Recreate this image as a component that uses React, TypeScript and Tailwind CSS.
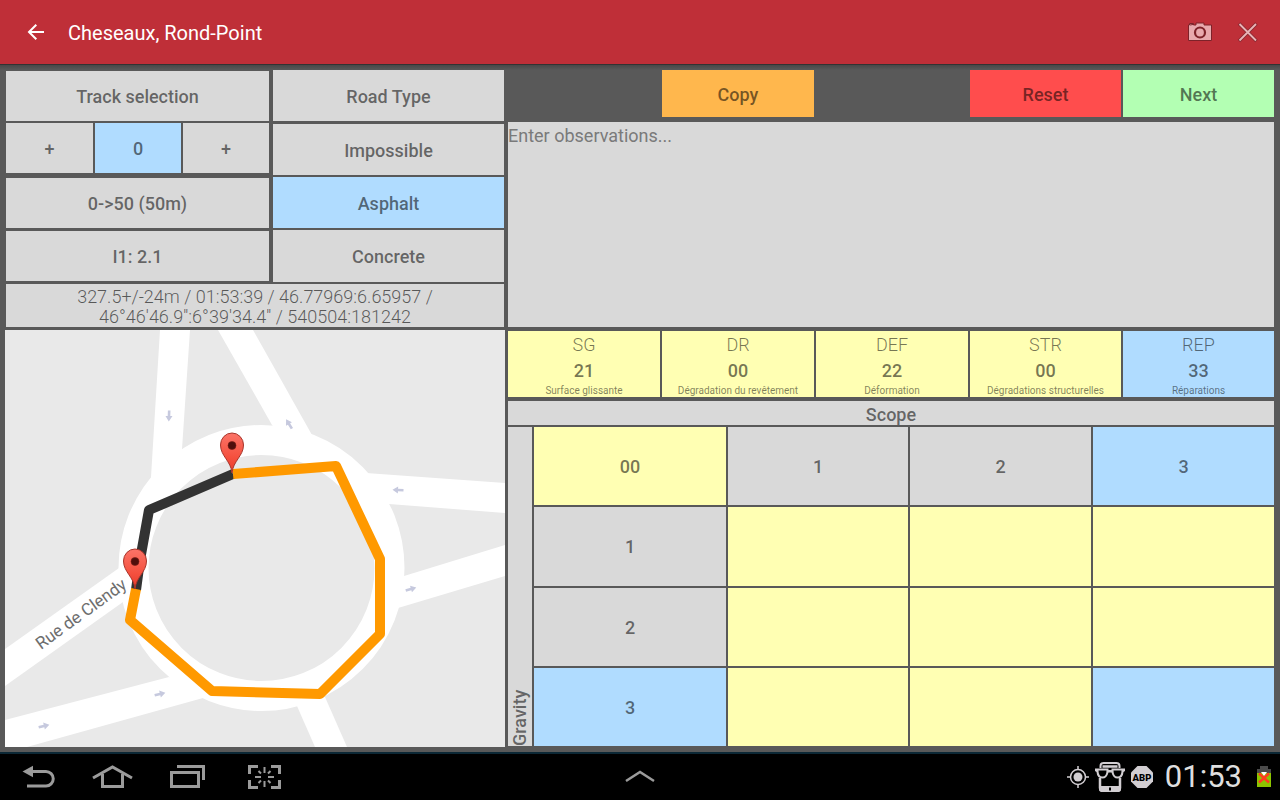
import React from "react";

type Tone = "grey" | "blue" | "yellow" | "orange" | "red" | "green";

const tones: Record<Tone, string> = {
  grey: "bg-[#d9d9d9]",
  blue: "bg-[#b0dcff]",
  yellow: "bg-[#ffffb3]",
  orange: "bg-[#ffb74d]",
  red: "bg-[#ff4d4d]",
  green: "bg-[#b3ffb3]",
};

function Cell({
  tone = "grey",
  className = "",
  label,
  children,
}: {
  tone?: Tone;
  className?: string;
  label?: string;
  children?: React.ReactNode;
}) {
  return (
    <button
      type="button"
      aria-label={label}
      className={`flex min-w-0 items-center justify-center pt-0.5 text-lg leading-5 font-medium text-black/55 ${tones[tone]} ${className}`}
    >
      {children}
    </button>
  );
}

function Header() {
  return (
    <header className="flex h-16 items-center bg-[#bf2f38] pr-5 pl-6 text-white">
      <button type="button" aria-label="Back" className="mr-5 flex size-6 items-center justify-center">
        <svg viewBox="0 0 24 24" className="size-6" fill="none" stroke="currentColor" strokeWidth="2">
          <path d="M20 12H5.500M12.300 4.700L5 12l7.300 7.300" />
        </svg>
      </button>
      <h1 className="flex-1 pt-0.5 text-xl">Cheseaux, Rond-Point</h1>
      <button type="button" aria-label="Take picture" className="mr-6 flex size-6 items-center justify-center">
        <svg viewBox="0 0 24 24" className="size-6">
          <path
            d="M.5 5h1V3.500h4V5h2.500V3h8v2h7.500v15.500H.5z"
            fill="#e8a9ad"
            stroke="#7d2229"
            strokeWidth="1"
          />
          <path d="M2 5l4-.7" stroke="#7d2229" strokeWidth="1" />
          <circle cx="12" cy="12.500" r="5" fill="#e8a9ad" stroke="#7d2229" strokeWidth="2.200" />
        </svg>
      </button>
      <button type="button" aria-label="Close" className="flex size-6 items-center justify-center">
        <svg viewBox="0 0 24 24" className="size-6" fill="none">
          <path d="M3 3.500l17.500 17.500M20.500 3.500L3 21" stroke="#8a2730" strokeWidth="3.600" />
          <path d="M3.500 4l16.500 16.500M20 4L3.500 20.500" stroke="#e8b4b7" strokeWidth="1.800" />
        </svg>
      </button>
    </header>
  );
}

const arrows = [
  { x: 169, y: 416, angle: 92 },
  { x: 289, y: 424, angle: -122 },
  { x: 398, y: 490, angle: 183 },
  { x: 411, y: 589, angle: -16 },
  { x: 160, y: 694, angle: -14 },
  { x: 44, y: 726, angle: -14 },
];

function Pin({ x, y }: { x: number; y: number }) {
  return (
    <g transform={`translate(${x} ${y})`}>
      <path
        d="M0 0C-1-12-11.500-17-11.500-28A11.500 12 0 0 1 11.500-28C11.500-17 1-12 0 0z"
        fill="url(#pin)"
        stroke="#a8352b"
        strokeWidth="1"
      />
      <circle cx="0" cy="-27.500" r="4" fill="#4f0f0c" stroke="#7b1d16" strokeWidth="0.600" />
    </g>
  );
}

function RoadMap() {
  return (
    <svg
      role="img"
      aria-label="Map"
      viewBox="5 330 500 417"
      preserveAspectRatio="xMidYMid slice"
      className="min-h-0 w-full flex-1 basis-0 bg-[#e9e9e9]"
    >
      <defs>
        <linearGradient id="pin" x1="0" y1="0" x2="0" y2="1">
          <stop offset="0" stopColor="#fb7468" />
          <stop offset="0.600" stopColor="#f5513f" />
          <stop offset="1" stopColor="#e8382a" />
        </linearGradient>
      </defs>
      <g fill="#fff">
        <path d="M160 330H190L182 449L195 470L170 495L151 477z" />
        <path d="M218 330H253L312 435L300 455L272 425z" />
        <path d="M366 473L505 483V513L389 504L370 500z" />
        <path d="M404 576L505 545V576L398 608L385 600z" />
        <path d="M297 706L315 747H347L325 697L310 690z" />
        <path d="M5 720L169 677L205 690L203 698L27 747H5z" />
        <path d="M5 649L119 568L135 580L123 602L5 686z" />
      </g>
      <circle cx="261.500" cy="568" r="128" fill="none" stroke="#fff" strokeWidth="30" />
      {arrows.map((a) => (
        <path
          key={`${a.x}-${a.y}`}
          transform={`translate(${a.x} ${a.y}) rotate(${a.angle})`}
          d="M-5.500-1.300H0V-3.500L5.500 0L0 3.500V1.300H-5.500z"
          fill="#c6c9de"
        />
      ))}
      <text
        transform="translate(41 650) rotate(-36)"
        fontSize="17"
        fill="#6e6e6e"
        stroke="#fff"
        strokeWidth="3"
        paintOrder="stroke"
      >
        Rue de Clendy
      </text>
      <g fill="none" strokeWidth="10" strokeLinejoin="round">
        <path d="M233 474L149 510L140 560L136 590" stroke="#333" />
        <path d="M233 474L336 466L380 559V634L320 694L212 691L130 620L136 589" stroke="#ff9900" />
      </g>
      <Pin x={232} y={473} />
      <Pin x={135} y={589} />
    </svg>
  );
}

function LeftPanel() {
  return (
    <section className="flex min-w-0 flex-col">
      <div className="grid grid-cols-[263fr_231fr] gap-x-1 px-px">
        <div className="flex flex-col pt-px">
          <Cell className="mb-0.5 h-[50px]">Track selection</Cell>
          <div className="mb-[5px] grid grid-cols-[87fr_86fr_86fr] gap-0.5">
            <Cell className="h-[50px]">+</Cell>
            <Cell tone="blue" className="h-[50px]">0</Cell>
            <Cell className="h-[50px]">+</Cell>
          </div>
          <Cell className="mb-[3px] h-[50px]">0-&gt;50 (50m)</Cell>
          <Cell className="h-[50px]">I1: 2.1</Cell>
        </div>
        <div className="flex flex-col gap-0.5">
          <div className={`mb-px flex h-[51px] items-center justify-center pt-0.5 text-lg leading-5 font-medium text-black/55 ${tones.grey}`}>
            Road Type
          </div>
          <Cell className="h-[51px]">Impossible</Cell>
          <Cell tone="blue" className="h-[51px]">Asphalt</Cell>
          <Cell className="h-[52px]">Concrete</Cell>
        </div>
      </div>
      <div className="mt-0.5 mb-[3px] px-px">
        <p className="bg-[#d9d9d9] px-16 pt-[3px] text-center text-lg leading-5 font-light text-black/60">
          327.5+/-24m / 01:53:39 / 46.77969:6.65957 / 46°46'46.9'':6°39'34.4'' / 540504:181242
        </p>
      </div>
      <RoadMap />
    </section>
  );
}

const summary: { code: string; value: string; name: string; tone: Tone }[] = [
  { code: "SG", value: "21", name: "Surface glissante", tone: "yellow" },
  { code: "DR", value: "00", name: "Dégradation du revêtement", tone: "yellow" },
  { code: "DEF", value: "22", name: "Déformation", tone: "yellow" },
  { code: "STR", value: "00", name: "Dégradations structurelles", tone: "yellow" },
  { code: "REP", value: "33", name: "Réparations", tone: "blue" },
];

const matrix: { tone: Tone; text: string }[][] = [
  [
    { tone: "yellow", text: "00" },
    { tone: "grey", text: "1" },
    { tone: "grey", text: "2" },
    { tone: "blue", text: "3" },
  ],
  [
    { tone: "grey", text: "1" },
    { tone: "yellow", text: "" },
    { tone: "yellow", text: "" },
    { tone: "yellow", text: "" },
  ],
  [
    { tone: "grey", text: "2" },
    { tone: "yellow", text: "" },
    { tone: "yellow", text: "" },
    { tone: "yellow", text: "" },
  ],
  [
    { tone: "blue", text: "3" },
    { tone: "yellow", text: "" },
    { tone: "yellow", text: "" },
    { tone: "blue", text: "" },
  ],
];

function RightPanel() {
  return (
    <section className="flex min-w-0 flex-col pb-px">
      <div className="mb-[5px] grid grid-cols-[152fr_152fr_152fr_151fr_151fr] gap-0.5">
        <Cell tone="orange" className="col-start-2 h-[47px]">Copy</Cell>
        <Cell tone="red" className="col-start-4 h-[47px]">Reset</Cell>
        <Cell tone="green" className="h-[47px]">Next</Cell>
      </div>
      <textarea
        aria-label="Observations"
        placeholder="Enter observations..."
        className="mb-1 block h-[205px] w-full resize-none bg-[#d9d9d9] pt-1 text-lg leading-5 text-[#5a5a5a] outline-none placeholder:text-[#7a7a7a]"
      />
      <div className="mb-1 grid grid-cols-[152fr_152fr_152fr_151fr_151fr] gap-0.5">
        {summary.map((s) => (
          <button
            key={s.code}
            type="button"
            className={`flex h-[66px] min-w-0 flex-col items-center pt-1 text-black/55 ${tones[s.tone]}`}
          >
            <span className="text-lg leading-5 font-light">{s.code}</span>
            <span className="mt-1.5 text-lg leading-5 font-medium">{s.value}</span>
            <span className="mt-1 text-[10px] leading-3 whitespace-nowrap text-black/50">{s.name}</span>
          </button>
        ))}
      </div>
      <div className="mb-0.5 bg-[#d9d9d9] pt-1 text-center text-lg leading-5 font-medium text-black/55">Scope</div>
      <div className="grid flex-1 grid-cols-[24px_1fr] gap-0.5">
        <div className="flex items-center justify-start bg-[#d9d9d9] text-lg leading-6 font-medium text-black/55 [writing-mode:vertical-rl] rotate-180">
          Gravity
        </div>
        <div className="grid grid-cols-[192fr_180fr_181fr_181fr] grid-rows-4 gap-0.5">
          {matrix.map((row, g) =>
            row.map((cell, s) => (
              <Cell key={`${g}-${s}`} tone={cell.tone} label={cell.text ? undefined : `Gravity ${g}, scope ${s}`}>
                {cell.text}
              </Cell>
            ))
          )}
        </div>
      </div>
    </section>
  );
}

function SystemBar() {
  return (
    <footer className="grid h-12 grid-cols-[minmax(0,1fr)_auto_minmax(0,1fr)] items-center border-t-2 border-[#0c2836] bg-black text-[#9b9b9b]">
      <nav className="flex items-center pl-5">
        <button type="button" aria-label="Back" className="mr-9">
          <svg viewBox="20 764 36 26" className="h-[26px] w-9" fill="none" stroke="currentColor" strokeWidth="3">
            <path d="M32 771.500H46A7 7 0 0 1 46 786H27" />
            <path d="M22.500 771.500L33 765.700V777.300z" fill="currentColor" stroke="none" />
          </svg>
        </button>
        <button type="button" aria-label="Home" className="mr-9">
          <svg viewBox="92 764 41 26" className="h-[26px] w-[41px]" fill="none" stroke="currentColor" strokeWidth="3">
            <path d="M93 778L112.500 767L132 778M102.500 774V786.500H122.500V774" />
          </svg>
        </button>
        <button type="button" aria-label="Recent apps" className="mr-10">
          <svg viewBox="169 764 38 26" className="h-[26px] w-[38px]" fill="none" stroke="currentColor" strokeWidth="3">
            <path d="M177 766.500H203.500V780" />
            <rect x="171.500" y="772.500" width="27" height="14" />
          </svg>
        </button>
        <button type="button" aria-label="Screenshot">
          <svg viewBox="247 764 35 26" className="h-[26px] w-[35px]" fill="none" stroke="currentColor">
            <path
              strokeWidth="3"
              d="M249.500 774V766.500H258M271 766.500H279.500V774M279.500 780V787.500H271M258 787.500H249.500V780"
            />
            <path
              strokeWidth="2"
              d="M264.500 767V773M264.500 781V787M255 777H261M268 777H274M258.500 771L261 773.500M270.500 771L268 773.500M258.500 783L261 780.500M270.500 783L268 780.500"
            />
          </svg>
        </button>
      </nav>
      <button type="button" aria-label="Open tray">
        <svg viewBox="0 0 30 14" className="h-3.5 w-[30px]" fill="none" stroke="currentColor" strokeWidth="2.500">
          <path d="M1 11L15 2L29 11" />
        </svg>
      </button>
      <div className="flex items-center justify-end pr-2 text-[#d2ced2]">
        <svg viewBox="0 0 22 22" className="mr-1.5 size-[22px]" fill="none" stroke="currentColor" strokeWidth="1.500">
          <circle cx="11" cy="11" r="7.500" />
          <circle cx="11" cy="11" r="4.500" fill="currentColor" stroke="none" />
          <path d="M11 0V4M11 18V22M0 11H4M18 11H22" />
        </svg>
        <svg viewBox="0 0 30 30" className="mr-1.5 size-[30px]" fill="none" stroke="currentColor" strokeWidth="2">
          <path d="M5.500 6V4Q5.500 1 8.500 1H21.500Q24.500 1 24.500 4V6" />
          <path d="M7.500 4.500H22.500" strokeWidth="2.500" />
          <path d="M5 16V26Q5 29 8 29H22Q25 29 25 26V16" strokeWidth="2.500" />
          <path d="M4 24H26V27Q26 30 22 30H8Q4 30 4 27z" fill="currentColor" stroke="none" />
          <path d="M0 6.500H13.500V8H16.500V6.500H30V9L28.500 10Q28 16.500 22.500 16.500Q18 16.500 16.500 10.500H13.500Q12 16.500 7.500 16.500Q2 16.500 1.500 10L0 9z" fill="currentColor" stroke="none" />
          <path d="M3.500 8.500H11.500Q11.500 14.500 7.500 14.500Q3.500 14.500 3.500 8.500zM18.500 8.500H26.500Q26.500 14.500 22.500 14.500Q18.500 14.500 18.500 8.500zM14 25.500H16V28.500H14z" fill="#000" stroke="none" />
        </svg>
        <svg viewBox="0 0 22 22" className="mr-3 size-[22px]" aria-label="ABP">
          <path d="M6.500 0H15.500L22 6.500V15.500L15.500 22H6.500L0 15.500V6.500z" fill="currentColor" />
          <text x="11" y="14.500" textAnchor="middle" fontSize="9.500" fontWeight="900" fill="#000">
            ABP
          </text>
        </svg>
        <time className="mr-3.5 text-[31px] leading-10 text-[#dedede]">01:53</time>
        <svg viewBox="0 0 16 22" className="h-[22px] w-4">
          <path d="M4 0H12V3H15V8H1V3H4z" fill="#4a4a4a" />
          <path d="M1 7H15V21H1z" fill="#8cc400" />
          <path d="M5 6H11L8 10z" fill="#fff" />
          <path d="M3 7.500L13 16.500M13 7.500L3 16.500" stroke="#ff3d1f" strokeWidth="2.500" />
        </svg>
      </div>
    </footer>
  );
}

export default function App() {
  return (
    <div className="flex min-h-screen flex-col bg-[#595959] font-[Roboto,sans-serif]">
      <Header />
      <div className="h-1.5 border-t border-[#333] bg-linear-to-b from-[#484848] to-[#595959]" />
      <main className="grid flex-1 grid-cols-[500fr_766fr] gap-[3px] pr-1.5 pb-[5px] pl-[5px]">
        <LeftPanel />
        <RightPanel />
      </main>
      <SystemBar />
    </div>
  );
}
